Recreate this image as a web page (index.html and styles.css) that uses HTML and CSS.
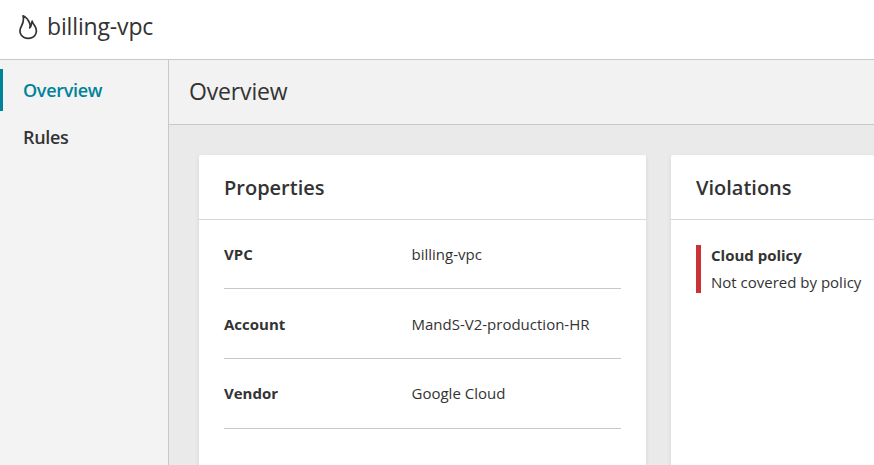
FILE: index.html
```html
<!DOCTYPE html>
<html lang="en">
<head>
<meta charset="utf-8">
<title>billing-vpc</title>
<link rel="stylesheet" href="styles.css">
</head>
<body>
<header class="top">
<svg class="flame" viewBox="0 0 20 26" width="20" height="26" fill="none" stroke="#333" stroke-width="1.7" stroke-linejoin="round" stroke-linecap="round"><path d="M5 1.800C6.400 6.500 5 9.200 3.500 12C1.600 15.200 1.400 18.300 3.200 21C6.300 25.400 14 25.400 17 21.200C19 18.200 18.600 15 17 12.300C15.700 10.200 14.400 8.900 14.200 7C13.400 9 13.700 12.500 11.700 13.900C12.700 11.700 12 9.700 11.100 8C9.700 5.200 8 3 5 1.800Z"/></svg>
<h1>billing-vpc</h1>
</header>
<div class="body">
<nav><a class="item active">Overview</a><a class="item">Rules</a></nav>
<main>
<div class="bar"><h2>Overview</h2></div>
<div class="cards">
<section class="card props">
<h3>Properties</h3>
<dl>
<div class="row"><dt>VPC</dt><dd>billing-vpc</dd></div>
<div class="row"><dt>Account</dt><dd>MandS-V2-production-HR</dd></div>
<div class="row"><dt>Vendor</dt><dd>Google Cloud</dd></div>
</dl>
</section>
<section class="card viol">
<h3>Violations</h3>
<div class="alert"><strong>Cloud policy</strong><span>Not covered by policy</span></div>
</section>
</div>
</main>
</div>
</body>
</html>
```
FILE: styles.css
```css
* { box-sizing: border-box; }
body { margin: 0; height: 465px; overflow: hidden; display: flex; flex-direction: column; font: 15px/20px "Open Sans", sans-serif; color: #333; background: #fff; }
h1, h2, h3, dl, dd { margin: 0; }
.top { height: 60px; flex: none; display: flex; padding: 14px 0 0 18px; border-bottom: 1px solid #c8c8c8; }
.top h1 { margin-left: 9px; font-size: 23px; line-height: 24px; font-weight: 400; letter-spacing: -.15px; }
.body { flex: 1; display: flex; min-height: 0; }
nav { width: 169px; flex: none; padding-top: 9px; background: #f3f3f3; border-right: 1px solid #c8c8c8; }
.item { display: block; height: 42px; margin-bottom: 5px; padding-left: 20px; border-left: 3px solid transparent; font-size: 18px; line-height: 42px; font-weight: 600; letter-spacing: -.3px; }
.active { color: #008299; border-color: #008299; }
main { flex: 1; min-width: 0; display: flex; flex-direction: column; background: #eaeaea; }
.bar { flex: none; height: 65px; padding-left: 20px; background: #f2f2f2; border-bottom: 1px solid #c8c8c8; }
.bar h2 { font-size: 23px; line-height: 62px; font-weight: 400; letter-spacing: -.15px; }
.cards { flex: 1; min-height: 0; display: grid; grid-template-columns: 447px 1fr; gap: 25px; padding: 30px 0 0 30px; }
.card { min-width: 0; background: #fff; border-radius: 2px 2px 0 0; box-shadow: 0 2px 4px rgba(0,0,0,.1); }
.card h3 { height: 65px; padding-left: 25px; border-bottom: 1px solid #d8d8d8; font-size: 20px; line-height: 66px; font-weight: 600; }
dl { padding: 0 25px; }
.row { height: 70px; display: flex; align-items: center; border-bottom: 1px solid #c8c8c8; }
.row:first-child { height: 69px; }
.row:last-child { padding-bottom: 2px; }
dt { width: 187.5px; font-weight: 700; }
.alert { display: flex; flex-direction: column; margin: 25px 0 0 25px; height: 48px; padding-left: 10px; border-left: 5px solid #cb3235; }
.alert strong { line-height: 21px; }
.alert span { margin-top: 6px; line-height: 21px; }
```
